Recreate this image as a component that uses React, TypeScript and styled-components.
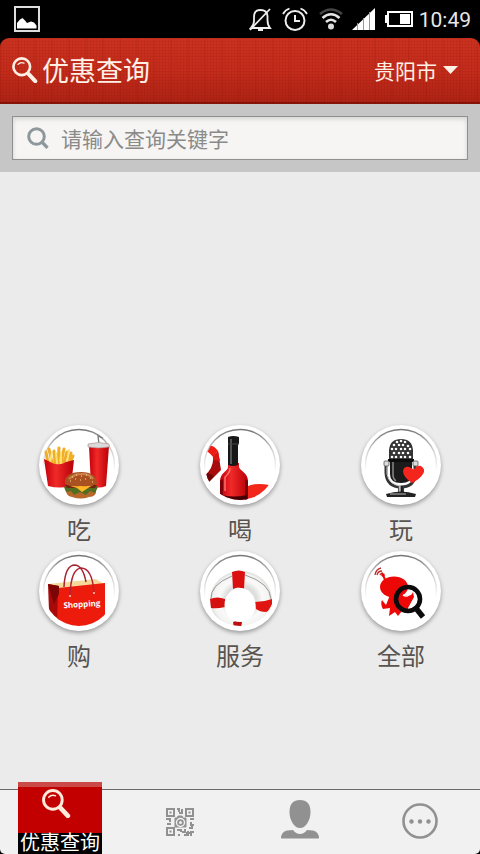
import React from "react";
import styled, { createGlobalStyle, css } from "styled-components";

const GlobalStyle = createGlobalStyle`
  *, *::before, *::after { box-sizing: border-box; }
  body {
    margin: 0;
    background: #000;
    font-family: "Noto Sans CJK SC", "Noto Sans", sans-serif;
  }
  button, input, select { font: inherit; }
  svg { display: block; }
`;

const Screen = styled.div`
  min-height: 100vh;
  display: flex;
  flex-direction: column;
`;

const StatusBar = styled.div`
  flex: none;
  height: 38px;
  padding: 0 9px 0 14px;
  display: flex;
  align-items: center;
  justify-content: space-between;
  background: #000;
  color: #e8e8e8;
`;

const StatusGroup = styled.div`
  display: flex;
  align-items: center;
  gap: 9px;
`;

const Clock = styled.span`
  margin-left: -3px;
  padding-top: 2px;
  font: 400 21px/24px Roboto, sans-serif;
`;

const Header = styled.header`
  flex: none;
  height: 66px;
  padding: 0 22px 0 12px;
  display: flex;
  align-items: center;
  justify-content: space-between;
  color: #fff0e6;
  border-radius: 9px 9px 0 0;
  border-bottom: 2px solid #861308;
  background:
    repeating-linear-gradient(90deg, rgba(90, 0, 0, 0.07) 0 1px, transparent 1px 3px),
    repeating-linear-gradient(90deg, rgba(110, 0, 0, 0.06) 0 2px, transparent 2px 17px),
    repeating-linear-gradient(0deg, rgba(90, 0, 0, 0.06) 0 1px, transparent 1px 3px),
    linear-gradient(#cb3220, #c42c1b 50%, #ae2314);
`;

const Brand = styled.div`
  display: flex;
  align-items: center;
  gap: 4px;
`;

const Title = styled.h1`
  margin: 0;
  font-size: 27px;
  line-height: 36px;
  font-weight: 400;
`;

const CityPicker = styled.label`
  display: flex;
  align-items: center;
  gap: 6px;
`;

const CitySelect = styled.select`
  appearance: none;
  border: 0;
  padding: 0;
  background: none;
  color: inherit;
  font-size: 21px;
  line-height: 32px;
  cursor: pointer;
`;

const SearchArea = styled.form`
  flex: none;
  padding: 12px;
  background: #c6c6c6;
`;

const SearchBox = styled.label`
  height: 44px;
  padding: 0 14px;
  display: flex;
  align-items: center;
  gap: 12px;
  border: 1px solid #8f8f8f;
  background: #f6f5f3;
  box-shadow: inset 0 2px 5px rgba(0, 0, 0, 0.14);
`;

const SearchInput = styled.input`
  flex: 1;
  min-width: 0;
  border: 0;
  padding: 0;
  outline: 0;
  background: none;
  color: #444;
  font-size: 21px;
  line-height: 32px;
  font-weight: 400;
  &::placeholder { color: #8a8a8a; opacity: 1; }
`;

const Main = styled.main`
  flex: 1;
  display: flex;
  flex-direction: column;
  justify-content: flex-end;
  padding: 24px 39px 112px;
  background: #ebebeb;
`;

const CategoryGrid = styled.div`
  display: grid;
  grid-template-columns: repeat(3, 80px);
  justify-content: space-between;
`;

const Category = styled.button`
  border: 0;
  padding: 0 0 2px;
  background: none;
  display: flex;
  flex-direction: column;
  align-items: center;
  gap: 4px;
  color: #58534f;
  font-size: 24px;
  line-height: 40px;
  font-weight: 400;
  cursor: pointer;
`;

const Medallion = styled.span`
  width: 80px;
  height: 80px;
  border-radius: 50%;
  overflow: hidden;
  background: #fff;
  box-shadow: 0 2px 4px rgba(0, 0, 0, 0.35);
`;

const TabBar = styled.nav`
  flex: none;
  height: 65px;
  display: grid;
  grid-template-columns: repeat(4, 1fr);
  border-top: 1px solid #6a6a6a;
  border-radius: 0 0 5px 5px;
  background: #f1f1f1;
`;

const Tab = styled.button<{ $active?: boolean }>`
  justify-self: center;
  width: 84px;
  height: 64px;
  border: 0;
  padding: 0;
  background: none;
  color: #919191;
  display: flex;
  flex-direction: column;
  align-items: center;
  justify-content: center;
  cursor: pointer;
  ${(p) =>
    p.$active &&
    css`
      height: 72px;
      margin-top: -8px;
      padding-top: 2px;
      justify-content: space-between;
      border-top: 5px solid #cb4a48;
      background: #c20000;
      color: #ffeadb;
    `}
`;

const TabIcon = styled.span`
  padding-right: 8px;
`;

const TabLabel = styled.span`
  align-self: stretch;
  padding-bottom: 4px;
  background: #000;
  color: #fff;
  font-size: 20px;
  line-height: 17px;
  text-align: center;
`;

const Lens = ({ size }: { size: number }) => (
  <svg width={size} height={size} viewBox="0 0 28 28" fill="none" stroke="currentColor" strokeLinecap="round">
    <circle cx="10.5" cy="10.5" r="9" strokeWidth="2.8" />
    <path d="M6.500 8Q9 5 13 6.500" strokeWidth="1.4" />
    <path d="M18 18.500L25 26" strokeWidth="4.4" />
  </svg>
);

const SearchGlyph = () => (
  <svg width="22" height="22" viewBox="0 0 22 22" fill="none" stroke="#8e979b">
    <circle cx="9.5" cy="9.5" r="7.8" strokeWidth="3" />
    <path d="M14.8 14.8L20.5 20.8" strokeWidth="3.4" />
  </svg>
);

const PictureIcon = () => (
  <svg width="26" height="26" viewBox="0 0 26 26">
    <rect x="1" y="1" width="24" height="24" fill="none" stroke="#ddd" strokeWidth="2" />
    <path d="M3 22.5V17L6 13.5 8.5 12 11 14.5 13 17 17 15.5 20 16.5 22.5 19.5V22.5Z" fill="#fff" />
  </svg>
);

const BellOffIcon = () => (
  <svg width="24" height="26" viewBox="0 0 24 26" fill="none" stroke="#eee" strokeWidth="1.8">
    <path d="M2 22H21Q18.500 19 18.500 14V10Q18 4 11.500 4 5 4 5 11V15Q5 19 2 22Z" />
    <path d="M21 3L1 24" />
    <path d="M9 23.5H14" strokeWidth="3" />
  </svg>
);

const AlarmIcon = () => (
  <svg width="26" height="26" viewBox="0 0 26 26" fill="none" stroke="#eee" strokeWidth="2">
    <circle cx="13" cy="14.500" r="9.500" />
    <path d="M13 9V15H18" />
    <path d="M1 8Q3 4 7.500 2.500M25 8Q23 4 18.500 2.500" strokeWidth="1.800" />
  </svg>
);

const WifiIcon = () => (
  <svg width="26" height="24" viewBox="0 0 26 24" fill="none" strokeWidth="2.6">
    <path d="M3 7Q14-2 25 7" stroke="#444" />
    <path d="M5.500 11Q14 3.500 22.500 11" stroke="#e5e5e5" />
    <path d="M9 15Q14 10.500 19 15" stroke="#e5e5e5" />
    <circle cx="14" cy="19.500" r="3" fill="#ddd" />
  </svg>
);

const SignalIcon = () => (
  <svg width="24" height="24" viewBox="0 0 24 24">
    <path d="M0 23L23 1V23Z" fill="#fff" />
    <path d="M5.500 16V23M11.500 11V23M17.500 5V23" stroke="#999" strokeWidth="1" />
  </svg>
);

const BatteryIcon = () => (
  <svg width="28" height="16" viewBox="0 0 28 16">
    <rect x="3" y="1" width="24" height="14" fill="none" stroke="#fff" strokeWidth="2" />
    <rect x="0" y="4" width="3" height="8" fill="#fff" />
    <rect x="15" y="3" width="10" height="10" fill="#fff" />
  </svg>
);

const SharedPaints = () => (
  <svg width="0" height="0" aria-hidden="true">
    <defs>
      <linearGradient id="rim" x1="0" y1="0" x2="0" y2="1">
        <stop offset="0" stopColor="#777" />
        <stop offset="0.3" stopColor="#d0d0d0" />
        <stop offset="0.6" stopColor="#fff" />
      </linearGradient>
      <linearGradient id="redGloss">
        <stop offset="0" stopColor="#c4000a" />
        <stop offset="0.4" stopColor="#f02a28" />
        <stop offset="1" stopColor="#b80007" />
      </linearGradient>
      <linearGradient id="chrome">
        <stop offset="0" stopColor="#222" />
        <stop offset="0.3" stopColor="#ddd" />
        <stop offset="0.6" stopColor="#111" />
        <stop offset="1" stopColor="#444" />
      </linearGradient>
      <radialGradient id="buoy">
        <stop offset="0.5" stopColor="#dededc" />
        <stop offset="0.7" stopColor="#fafafa" />
        <stop offset="0.9" stopColor="#f3f3f2" />
        <stop offset="1" stopColor="#dcdcda" />
      </radialGradient>
      <clipPath id="disc"><circle cx="40" cy="40" r="35" /></clipPath>
    </defs>
  </svg>
);

const Art = ({ children }: { children: React.ReactNode }) => (
  <svg width="80" height="80" viewBox="0 0 80 80" aria-hidden="true">
    <circle cx="40" cy="40" r="35.500" fill="#fff" stroke="url(#rim)" strokeWidth="1.400" />
    {children}
  </svg>
);

const FoodArt = () => (
  <Art>
    <g stroke="#f0ad28" strokeWidth="3" strokeLinecap="round">
      <path d="M9 38L7 27M13 38L10 24M16 38L15 26M19 38L20 23M22 38L25 24M25 38L28 27M29 38L32 28M31 38L34 31" />
      <path d="M11 38L13 27M18 38L17 28M22 38L22 27M28 38L30 25" stroke="#ffe070" strokeWidth="2" />
    </g>
    <path d="M5 34Q10 36 13 38 21 41 27 37L35 35 32 61Q21 64 9 61Z" fill="url(#redGloss)" />
    <path d="M60 19L59 11 64 13" fill="none" stroke="#777" strokeWidth="1.300" />
    <path d="M50 21H70L67 61Q60 64 52 61Z" fill="url(#redGloss)" />
    <path d="M49 19Q60 16 70 19V22Q60 24 49 22Z" fill="#dadada" stroke="#a88" strokeWidth="0.600" />
    <path d="M27 65Q42 69 57 64 58 72 50 72 42 75 33 72 27 71 27 65Z" fill="#b8682b" />
    <path d="M25 62Q29 59 42 60 55 59 59 62L56 68 51 66 47 70 41 67 35 70 32 66 27 67Z" fill="#536d20" />
    <path d="M26 60H58L56 63H28Z" fill="#6d2410" />
    <path d="M31 61L54 60 49 63 43 67 38 63Z" fill="#ffb624" />
    <path d="M26 59Q25 47 42 47 58 47 58 59 51 62 42 61 31 62 26 59Z" fill="#aa5122" />
    <path d="M30 54Q35 49 43 49 51 49 54 54" fill="none" stroke="#cb8148" strokeWidth="2" />
    <path d="M33 52h1M37 50h1M42 51h1M47 50h1M51 53h1M36 54h1M41 55h1M46 54h1M31 56h1M53 57h1" stroke="#ffe3a4" strokeWidth="1" />
  </Art>
);

const DrinkArt = () => (
  <Art>
    <g clipPath="url(#disc)">
      <path d="M6 21Q13 19 18 26L13 32Q9 27 6 26Z" fill="#f11c13" />
      <path d="M18 26L21 45L8 58 4 51Q14 43 13 32Z" fill="#a80b0b" />
      <path d="M18 26L20 36L13 35 13 32Z" fill="#dc1712" />
      <path d="M8 48L14 51 8 58 4 52Z" fill="#6f0505" />
      <path d="M46 62Q56 57 69 60L65 68Q56 74 46 74Z" fill="#f3281b" />
      <path d="M28 38H39V42C40 46 48 48 48 56V76H20V56C20 48 28 46 28 42Z" fill="url(#redGloss)" />
      <path d="M20 56V76H23V54ZM45 54V76H48V56Z" fill="#7b0008" />
      <path d="M30 43Q30 48 25 52V66" fill="none" stroke="#ff7770" strokeWidth="1.400" />
      <path d="M22 70Q34 73 47 70V76H22Z" fill="#420006" />
      <path d="M28 12Q33 10 39 12V18L38 20V40Q33 42 28 40Z" fill="#171717" />
      <path d="M31 14V39" stroke="#666" strokeWidth="1.600" />
      <path d="M28 19H39" stroke="#444" strokeWidth="1" />
    </g>
  </Art>
);

const meshDots = [
  [36, 17], [40, 16], [44, 17], [33, 20], [38, 20], [42, 20], [47, 21], [31, 24], [35, 24], [40, 24], [44, 24], [49, 24],
  [33, 28], [38, 28], [42, 28], [47, 28], [31, 32], [35, 32], [40, 32], [44, 32], [49, 32],
];

const PlayArt = () => (
  <Art>
    <path d="M25 40V48Q26 62 40 62 54 62 54 48V40" fill="none" stroke="#333" strokeWidth="3" />
    <path d="M26 40V49Q28 60 40 61" fill="none" stroke="#ccc" strokeWidth="1" />
    <path d="M29 33H51V49Q51 58 40 58 29 58 29 49Z" fill="#1b1b1b" />
    <path d="M32 37V50Q32 54 35 56" fill="none" stroke="#888" strokeWidth="1.500" />
    <path d="M28 34V25Q29 14 40 14 51 14 52 25V34Z" fill="#333" />
    <g fill="#fff">
      {meshDots.map(([x, y]) => <circle key={`${x}-${y}`} cx={x} cy={y} r="1.300" />)}
    </g>
    <rect x="27" y="34" width="26" height="3" fill="#0d0d0d" />
    <rect x="23" y="36" width="5" height="5" rx="1" fill="#ddd" stroke="#555" strokeWidth="0.800" />
    <rect x="52" y="36" width="5" height="5" rx="1" fill="#ddd" stroke="#555" strokeWidth="0.800" />
    <path d="M37 61H43V67H37Z" fill="url(#chrome)" />
    <path d="M25 69Q40 64 55 69L54 72H26Z" fill="#222" />
    <path d="M29 69H45" stroke="#bbb" strokeWidth="1" />
    <path d="M51 58Q42 52 42 46 43 41 48 42 51 43 53 45 55 40 60 41 65 44 62 49 59 54 51 58Z" fill="#f4251d" />
  </Art>
);

const ShopText = styled.text`
  font: 700 8px "Open Sans", sans-serif;
  fill: #fff;
`;

const ShopArt = () => (
  <Art>
    <g clipPath="url(#disc)">
      <path d="M9 33L57 28 65 33 20 41Z" fill="#f5d99b" />
      <path d="M25 36Q26 14 36 14 44 15 47 31" fill="none" stroke="#a52432" strokeWidth="1.500" />
      <path d="M9 33L20 35V76L10 60Z" fill="#a80909" />
      <path d="M19 37L66 32V76H18Z" fill="#ed1b0c" />
      <path d="M9 33L20 35V43L15 53Z" fill="#7c0606" />
      <path d="M31 44Q32 18 42 17 53 17 55 41" fill="none" stroke="#b32231" strokeWidth="1.500" />
      <circle cx="31" cy="45" r="1" fill="#ffd1b6" />
      <circle cx="55" cy="42" r="1" fill="#ffd1b6" />
      <ShopText x="43" y="56" textAnchor="middle" transform="rotate(-4 43 54)">Shopping</ShopText>
    </g>
  </Art>
);

const ServiceArt = () => (
  <Art>
    <g clipPath="url(#disc)">
      <ellipse cx="41" cy="49" rx="31" ry="29" fill="url(#buoy)" />
      <path d="M32 21Q39 18 45 21L44 38Q38 35 33 38Z" fill="#d9100f" />
      <path d="M10 48Q17 45 25 48V56Q17 58 11 57Z" fill="#d5110f" />
      <path d="M55 51Q64 51 72 48L72 53Q69 60 66 61 60 61 56 58Z" fill="#e01512" />
      <path d="M33 71Q38 69 42 71L41 77H34Z" fill="#bd0d0d" />
      <ellipse cx="40" cy="54" rx="15.500" ry="17" fill="#fff" />
      <path d="M11 48Q10 34 32 25M45 24Q70 32 71 48" fill="none" stroke="#999" strokeWidth="1" />
    </g>
  </Art>
);

const AllArt = () => (
  <Art>
    <g fill="none" stroke="#c22a2a" strokeWidth="1.300">
      <path d="M14 24Q15 18 20 17M16 24Q17 20 21 20M19 24Q20 22 22 22" />
      <path d="M22 24L25 31" stroke="#ee0d0d" strokeWidth="2" />
    </g>
    <circle cx="22" cy="24" r="1.800" fill="#e00" />
    <ellipse cx="33" cy="36" rx="14" ry="10.500" fill="#ed0808" />
    <path d="M29 44H46Q50 46 52 41L53 46 47 57 48 62 41 60 37 65 34 61 28 65 29 57 22 58Q19 53 21 49L25 54Z" fill="#ed0808" />
    <circle cx="47" cy="48" r="12" fill="none" stroke="#0b0b0b" strokeWidth="4.600" />
    <path d="M54 56L62 66" stroke="#0b0b0b" strokeWidth="5.500" />
    <path d="M42 44Q47 47 50 41" fill="none" stroke="#fff" strokeWidth="1.600" />
  </Art>
);

const QrIcon = () => (
  <svg width="28" height="28" viewBox="0 0 28 28" fill="none" stroke="currentColor" strokeWidth="2">
    <path d="M1 1H8V8H1ZM20 1H27V8H20ZM1 20H8V27H1Z" />
    <path d="M3.500 4.500H5.500M22.500 4.500H24.500M3.500 23.500H5.500M11 1H13V4M16 1V5H13M0 11H4V14M1 16H5M24 11H28M25 14V17H28M11 22H15V24M12 27H14M18 27H22V23M25 28V24H28M23 20H26V18M16 24H19V21M20 25H24" />
    <path d="M9 10H11L12 8H16L17 10H20V19H9Z" fill="currentColor" strokeWidth="1" />
    <circle cx="14.500" cy="14.500" r="4" stroke="#f1f1f1" strokeWidth="1.400" />
    <circle cx="14.500" cy="14.500" r="1.500" fill="#f1f1f1" stroke="none" />
  </svg>
);

const PersonIcon = () => (
  <svg width="38" height="44" viewBox="0 0 38 44" fill="currentColor">
    <path d="M19 0C26 0 29.500 4 29.500 12C29.500 20 25 28 19 28C13 28 8.500 20 8.500 12C8.500 4 12 0 19 0Z" />
    <path d="M0 38.500Q0 32 6 30.500L12 30Q15 34 19 34 23 34 26 30L32 30.500Q38 32 38 38.500Z" />
  </svg>
);

const MoreIcon = () => (
  <svg width="36" height="38" viewBox="0 0 36 38" fill="currentColor">
    <circle cx="18" cy="18" r="16.500" fill="none" stroke="currentColor" strokeWidth="2.600" />
    <circle cx="9.500" cy="18.500" r="2.200" />
    <circle cx="18" cy="18.500" r="2.200" />
    <circle cx="26.500" cy="18.500" r="2.200" />
  </svg>
);

const categories = [
  { label: "吃", Icon: FoodArt },
  { label: "喝", Icon: DrinkArt },
  { label: "玩", Icon: PlayArt },
  { label: "购", Icon: ShopArt },
  { label: "服务", Icon: ServiceArt },
  { label: "全部", Icon: AllArt },
];

export default function App() {
  return (
    <>
      <GlobalStyle />
      <Screen>
        <StatusBar>
          <PictureIcon />
          <StatusGroup>
            <BellOffIcon />
            <AlarmIcon />
            <WifiIcon />
            <SignalIcon />
            <BatteryIcon />
            <Clock>10:49</Clock>
          </StatusGroup>
        </StatusBar>
        <Header>
          <Brand>
            <Lens size={26} />
            <Title>优惠查询</Title>
          </Brand>
          <CityPicker>
            <CitySelect aria-label="城市">
              <option>贵阳市</option>
            </CitySelect>
            <svg width="15" height="8" viewBox="0 0 15 8" fill="currentColor">
              <path d="M0 0H15L7.500 8Z" />
            </svg>
          </CityPicker>
        </Header>
        <SearchArea onSubmit={(e) => e.preventDefault()}>
          <SearchBox>
            <SearchGlyph />
            <SearchInput type="search" aria-label="查询关键字" placeholder="请输入查询关键字" />
          </SearchBox>
        </SearchArea>
        <Main>
          <SharedPaints />
          <CategoryGrid>
            {categories.map(({ label, Icon }) => (
              <Category key={label} type="button">
                <Medallion>
                  <Icon />
                </Medallion>
                {label}
              </Category>
            ))}
          </CategoryGrid>
        </Main>
        <TabBar>
          <Tab type="button" $active aria-current="page">
            <TabIcon>
              <Lens size={29} />
            </TabIcon>
            <TabLabel>优惠查询</TabLabel>
          </Tab>
          <Tab type="button" aria-label="二维码"><QrIcon /></Tab>
          <Tab type="button" aria-label="我的"><PersonIcon /></Tab>
          <Tab type="button" aria-label="更多"><MoreIcon /></Tab>
        </TabBar>
      </Screen>
    </>
  );
}
